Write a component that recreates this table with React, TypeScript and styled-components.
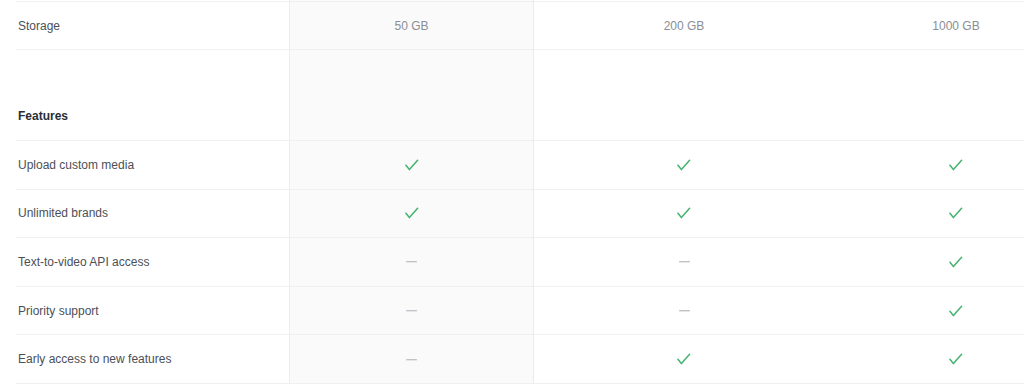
import React from "react";
import styled, { createGlobalStyle } from "styled-components";

const GlobalStyle = createGlobalStyle`
  html, body {
    margin: 0;
    padding: 0;
    background: #ffffff;
  }
  body {
    font-family: "Liberation Sans", Arial, sans-serif;
    -webkit-font-smoothing: antialiased;
  }
`;

const Viewport = styled.div`
  width: 1024px;
  height: 384px;
  overflow: hidden;
  padding-left: 16px;
  box-sizing: border-box;
`;

const Table = styled.div`
  display: grid;
  grid-template-columns: 273px 245px 300px 244px;
  width: 1062px;
`;

type RowProps = { $height: string; $top?: boolean; $bottom?: boolean };

const Row = styled.div<RowProps>`
  display: contents;

  & > * {
    height: ${(p) => p.$height};
    box-sizing: border-box;
    border-top: ${(p) => (p.$top ? "1px solid #f0f0f0" : "none")};
    border-bottom: ${(p) => (p.$bottom === false ? "none" : "1px solid #f0f0f0")};
  }
`;

const LabelCell = styled.div<{ $align?: "center" | "end" }>`
  display: flex;
  align-items: ${(p) => (p.$align === "end" ? "flex-end" : "center")};
  padding-left: 2px;
  padding-bottom: ${(p) => (p.$align === "end" ? "17px" : "0")};
  font-size: 12px;
  color: #4b5058;
`;

const SectionTitle = styled.span`
  font-weight: 700;
  color: #2a2e35;
  font-size: 12px;
`;

const PlanCell = styled.div<{ $featured?: boolean }>`
  display: flex;
  align-items: center;
  justify-content: center;
  font-size: 12px;
  color: #8a8e95;
  background: ${(p) => (p.$featured ? "#fafafa" : "transparent")};
  border-left: ${(p) => (p.$featured ? "1px solid #ececec" : "none")};
  border-right: ${(p) => (p.$featured ? "1px solid #ececec" : "none")};
`;

const CheckMark = () => (
  <svg width="14" height="12" viewBox="0 0 14 12" fill="none" aria-hidden="true">
    <path
      d="M1 6.2 L4.4 10.6 L12.6 1.2"
      stroke="#46b26f"
      strokeWidth="1.5"
      strokeLinecap="round"
      strokeLinejoin="round"
    />
  </svg>
);

const Dash = styled.span`
  display: block;
  width: 11px;
  height: 1px;
  background: #bfc2c7;
  box-shadow: 0 1px 0 #e4e6e8;
  border-radius: 1px;
`;

type Value = boolean | string;

const features: { label: string; values: [Value, Value, Value] }[] = [
  { label: "Upload custom media", values: [true, true, true] },
  { label: "Unlimited brands", values: [true, true, true] },
  { label: "Text-to-video API access", values: [false, false, true] },
  { label: "Priority support", values: [false, false, true] },
  { label: "Early access to new features", values: [false, true, true] },
];

const renderValue = (v: Value) =>
  typeof v === "string" ? v : v ? <CheckMark /> : <Dash />;

export default function App() {
  return (
    <>
      <GlobalStyle />
      <Viewport>
        <Table>
          <Row $height="1px" $bottom={false}>
            <LabelCell />
            <PlanCell $featured />
            <PlanCell />
            <PlanCell />
          </Row>
          <Row $height="49px" $top>
            <LabelCell>Storage</LabelCell>
            <PlanCell $featured>50 GB</PlanCell>
            <PlanCell>200 GB</PlanCell>
            <PlanCell>1000 GB</PlanCell>
          </Row>
          <Row $height="91px">
            <LabelCell $align="end">
              <SectionTitle>Features</SectionTitle>
            </LabelCell>
            <PlanCell $featured />
            <PlanCell />
            <PlanCell />
          </Row>
          {features.map((f) => (
            <Row key={f.label} $height="48.6px">
              <LabelCell>{f.label}</LabelCell>
              <PlanCell $featured>{renderValue(f.values[0])}</PlanCell>
              <PlanCell>{renderValue(f.values[1])}</PlanCell>
              <PlanCell>{renderValue(f.values[2])}</PlanCell>
            </Row>
          ))}
        </Table>
      </Viewport>
    </>
  );
}
